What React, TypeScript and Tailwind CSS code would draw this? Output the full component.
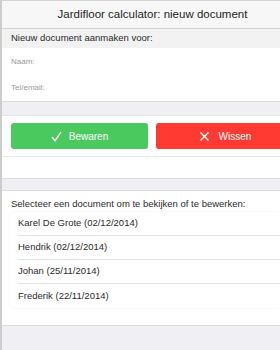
import React from 'react';

const items = [
  'Karel De Grote (02/12/2014)',
  'Hendrik (02/12/2014)',
  'Johan (25/11/2014)',
  'Frederik (22/11/2014)',
];

const App: React.FC = () => {
  return (
    <div
      className="w-[280px] h-[350px] overflow-hidden bg-[#efeff4] border-l-2 border-[#cdcdcd] flex flex-col"
      style={{ fontFamily: '"Liberation Sans", Arial, sans-serif' }}
    >
      {/* Header */}
      <div className="h-[29px] shrink-0 bg-[#f7f7f7] border-t border-b border-[#d4d4d4] flex items-center justify-center text-[11.5px] text-[#1e1e1e] pl-[23px]">
        Jardifloor calculator: nieuw document
      </div>

      {/* Nieuw document */}
      <div className="h-[19px] shrink-0 bg-[#f2f2f2] flex items-center px-[9px] text-[9.5px] text-[#2a2a2a]">
        Nieuw document aanmaken voor:
      </div>
      <div className="h-[54px] shrink-0 bg-white border-b border-[#dcdcdc] flex flex-col px-[9px] text-[8px] text-[#999]">
        <div className="h-[27px] flex items-center pt-[1px]">Naam:</div>
        <div className="h-[26px] flex items-center">Tel/email:</div>
      </div>

      <div className="h-[13px] shrink-0" />

      {/* Buttons */}
      <div className="h-[42px] shrink-0 bg-white border-t border-b border-[#e6e6e6] flex gap-[8px] pl-[9px] pt-[7px] overflow-hidden">
        <button className="w-[137px] h-[26px] shrink-0 rounded-[3px] bg-[#4ac95f] text-white text-[10px] flex items-center justify-center gap-[7px]">
          <svg width="11" height="11" viewBox="0 0 11 11" fill="none" stroke="white" strokeWidth="1.4">
            <path d="M1 6 L4 9.8 L10 1" />
          </svg>
          Bewaren
        </button>
        <button className="w-[139px] h-[26px] shrink-0 rounded-[3px] bg-[#fe3a32] text-white text-[10px] flex items-center justify-center gap-[10px]">
          <svg width="9" height="9" viewBox="0 0 9 9" fill="none" stroke="white" strokeWidth="1.4">
            <path d="M0.5 0.5 L8.5 8.5 M8.5 0.5 L0.5 8.5" />
          </svg>
          Wissen
        </button>
      </div>
      <div className="h-[22px] shrink-0 bg-white border-b border-[#dcdcdc]" />

      <div className="h-[11px] shrink-0" />

      {/* Document list */}
      <div className="h-[136px] shrink-0 bg-white border-t border-b border-[#dcdcdc] flex flex-col pt-[6px]">
        <div className="px-[9px] text-[9.5px] text-[#2a2a2a] h-[14px] flex items-center whitespace-nowrap">
          Selecteer een document om te bekijken of te bewerken:
        </div>
        <div className="ml-[8px] mt-[1px] bg-white shadow-[0_0_2px_rgba(0,0,0,0.08)] rounded-[2px] overflow-hidden">
          {items.map((item, i) => (
            <div key={item} className="h-[24px] flex pl-[8px]">
              <div
                className={`flex-1 flex items-center justify-between ${
                  i < items.length - 1 ? 'border-b border-[#e0e0e0]' : ''
                }`}
              >
                <span className="text-[9.5px] text-[#2a2a2a]">{item}</span>
                <svg width="6" height="8" viewBox="0 0 6 8" fill="none" stroke="#c8c8c8" strokeWidth="1" className="mr-[-5px]">
                  <path d="M1 1 L4 4 L1 7" />
                </svg>
              </div>
            </div>
          ))}
        </div>
      </div>

      <div className="flex-1" />
    </div>
  );
};

export default App;
